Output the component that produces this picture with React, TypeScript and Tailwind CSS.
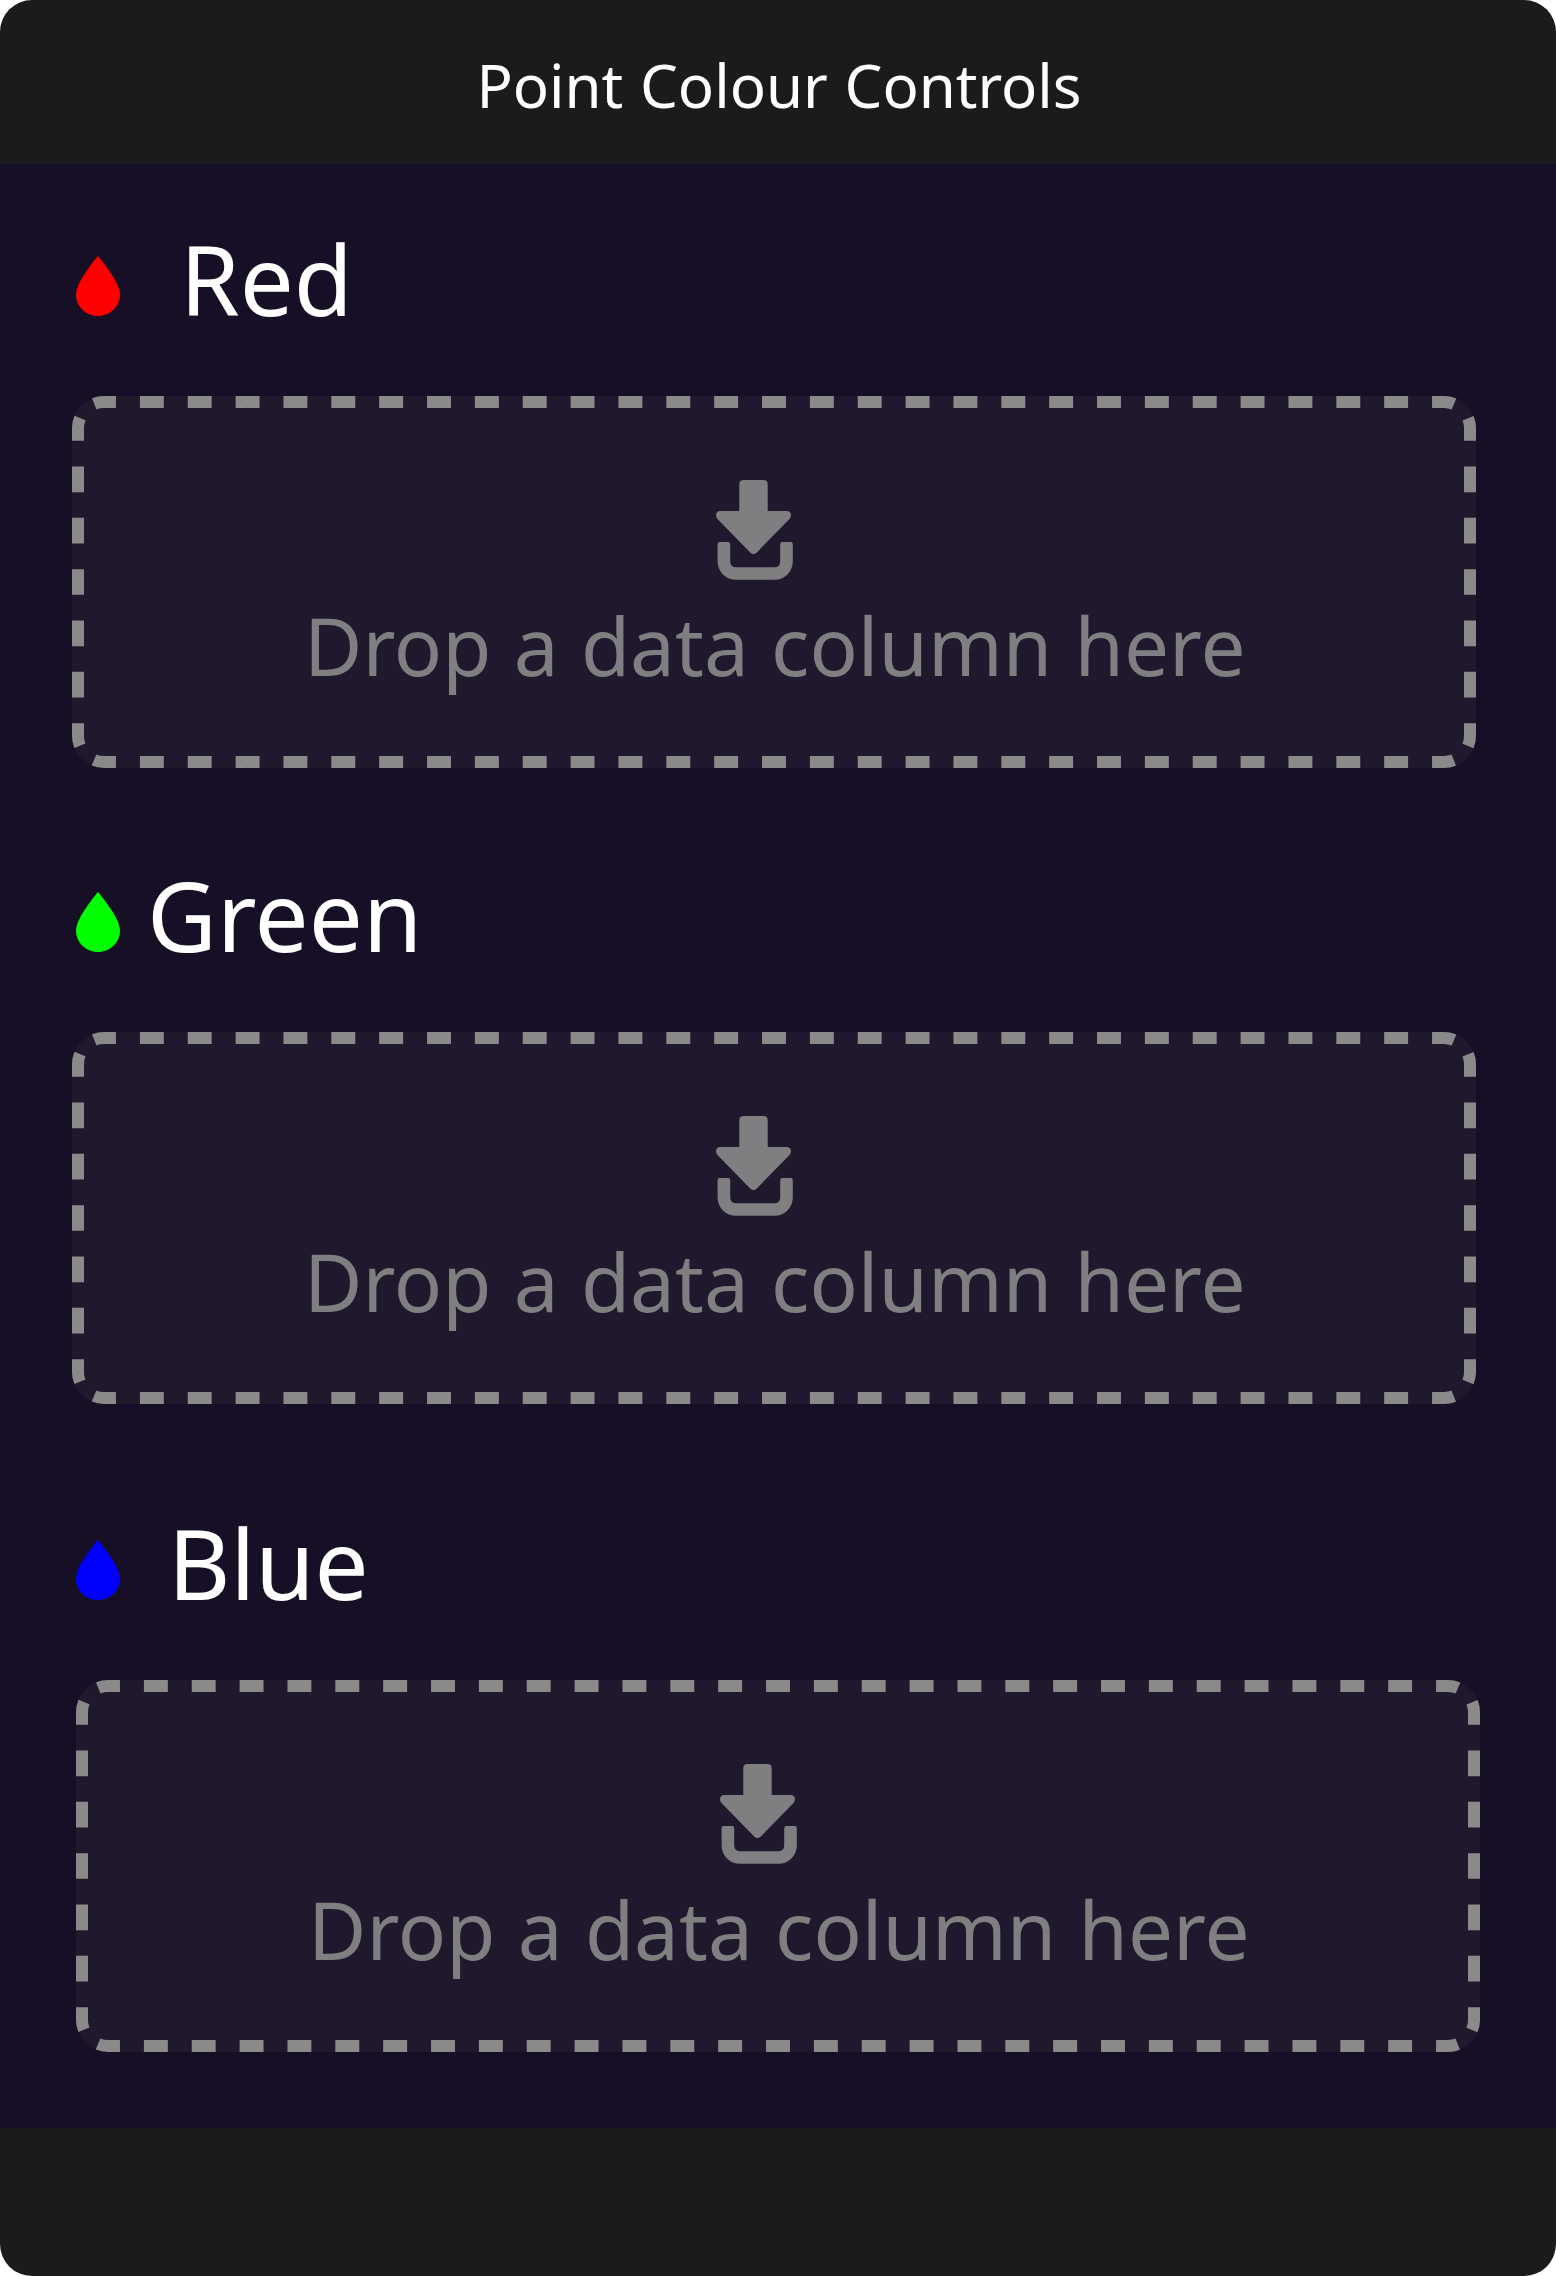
import React from "react";

const BOX_W = 1404;
const BOX_H = 372;
const RADIUS = 32;
const STROKE = 12;
const DASH = 24;

/** Splits a segment into whole dash periods so that it starts and ends on half a dash. */
function dashFor(length: number) {
  const unit = length / Math.max(1, Math.round(length / (DASH * 2))) / 4;
  return `${unit} ${unit * 2} ${unit} 0`;
}

function DashedFrame() {
  const o = STROKE / 2;
  const r = RADIUS - o;
  const arc = (Math.PI * r) / 2;
  const w = BOX_W;
  const h = BOX_H;
  const sides = [
    { d: `M${RADIUS} ${o}H${w - RADIUS}`, len: w - 2 * RADIUS },
    { d: `M${RADIUS} ${h - o}H${w - RADIUS}`, len: w - 2 * RADIUS },
    { d: `M${o} ${RADIUS}V${h - RADIUS}`, len: h - 2 * RADIUS },
    { d: `M${w - o} ${RADIUS}V${h - RADIUS}`, len: h - 2 * RADIUS },
    { d: `M${o} ${RADIUS}A${r} ${r} 0 0 1 ${RADIUS} ${o}`, len: arc },
    { d: `M${w - RADIUS} ${o}A${r} ${r} 0 0 1 ${w - o} ${RADIUS}`, len: arc },
    { d: `M${w - o} ${h - RADIUS}A${r} ${r} 0 0 1 ${w - RADIUS} ${h - o}`, len: arc },
    { d: `M${RADIUS} ${h - o}A${r} ${r} 0 0 1 ${o} ${h - RADIUS}`, len: arc },
  ];
  return (
    <svg
      className="pointer-events-none absolute inset-0"
      width={w}
      height={h}
      viewBox={`0 0 ${w} ${h}`}
      fill="none"
      stroke="#8a8a8a"
      strokeWidth={STROKE}
      aria-hidden="true"
    >
      {sides.map((s) => (
        <path key={s.d} d={s.d} strokeDasharray={dashFor(s.len)} />
      ))}
    </svg>
  );
}

function Drop({ className }: { className: string }) {
  return (
    <svg className={`h-[60px] w-[44px] shrink-0 ${className}`} viewBox="0 0 44 60" fill="currentColor" aria-hidden="true">
      <path d="M22 0C22 0 0 25.5 0 38.5C0 50.4 9.85 60 22 60C34.15 60 44 50.4 44 38.5C44 25.5 22 0 22 0Z" />
    </svg>
  );
}

function DownloadIcon() {
  return (
    <svg className="h-[100px] w-[78px]" viewBox="0 0 78 100" fill="currentColor" aria-hidden="true">
      <path d="M27.8 0H47.6Q51.7 0 51.7 4.2V31H70.5Q75 31 75 35.5Q75 37.4 73.3 39.2L40.8 72.4Q37.5 75.4 34.2 72.4L1.7 39.2Q0 37.4 0 35.5Q0 31 4.5 31H23.3V4.2Q23.3 0 27.8 0Z" />
      <path d="M3.8 62H12Q14.2 62 14.2 64.2V81Q14.2 87.3 20.5 87.3H58Q64.2 87.3 64.2 81V64.2Q64.2 62 66.4 62H74.6Q76.8 62 76.8 64.2V81.5A18.3 18.3 0 0 1 58.5 99.8H19.9A18.3 18.3 0 0 1 1.6 81.5V64.2Q1.6 62 3.8 62Z" />
    </svg>
  );
}

function DropZone({ className }: { className: string }) {
  return (
    <div
      className={`relative flex h-[372px] w-[1404px] flex-col rounded-[32px] bg-[#20182c] pt-[84px] text-[#7f7f81] ${className}`}
    >
      <DashedFrame />
      <div className="ml-[644px]">
        <DownloadIcon />
      </div>
      <p className="mt-[5px] ml-[232px] text-[80px] leading-[120px] [word-spacing:1.5px] whitespace-nowrap">
        Drop a data column here
      </p>
    </div>
  );
}

const channels = [
  { name: "Red", color: "text-[#ff0000]", label: "ml-[60px]", zone: "ml-[72px]", section: "h-[636px]" },
  { name: "Green", color: "text-[#00ff00]", label: "ml-[27px]", zone: "ml-[72px]", section: "h-[648px]" },
  { name: "Blue", color: "text-[#0000ff]", label: "ml-[48px]", zone: "ml-[76px]", section: "h-[588px]" },
];

export default function App() {
  return (
    <div className="h-[2276px] w-[1556px] bg-white font-['Noto_Sans',sans-serif]">
      <div className="flex h-full flex-col overflow-hidden rounded-[32px] bg-[#1b1b1d]">
        <header className="flex h-[164px] shrink-0 justify-center pt-[40px] pl-[2px]">
          <h1 className="text-[60px] leading-[90px] [word-spacing:1.1px] text-white">Point Colour Controls</h1>
        </header>
        <main className="h-[1964px] shrink-0 bg-[#170f26] pt-[43px]">
          {channels.map((c) => (
            <section key={c.name} className={c.section}>
              <div className="flex h-[144px] pl-[76px]">
                <Drop className={`mt-[49px] ${c.color}`} />
                <h2 className={`text-[96px] leading-[144px] text-white ${c.label}`}>{c.name}</h2>
              </div>
              <div className="pt-[45px]">
                <DropZone className={c.zone} />
              </div>
            </section>
          ))}
        </main>
        <footer className="flex-1" />
      </div>
    </div>
  );
}
